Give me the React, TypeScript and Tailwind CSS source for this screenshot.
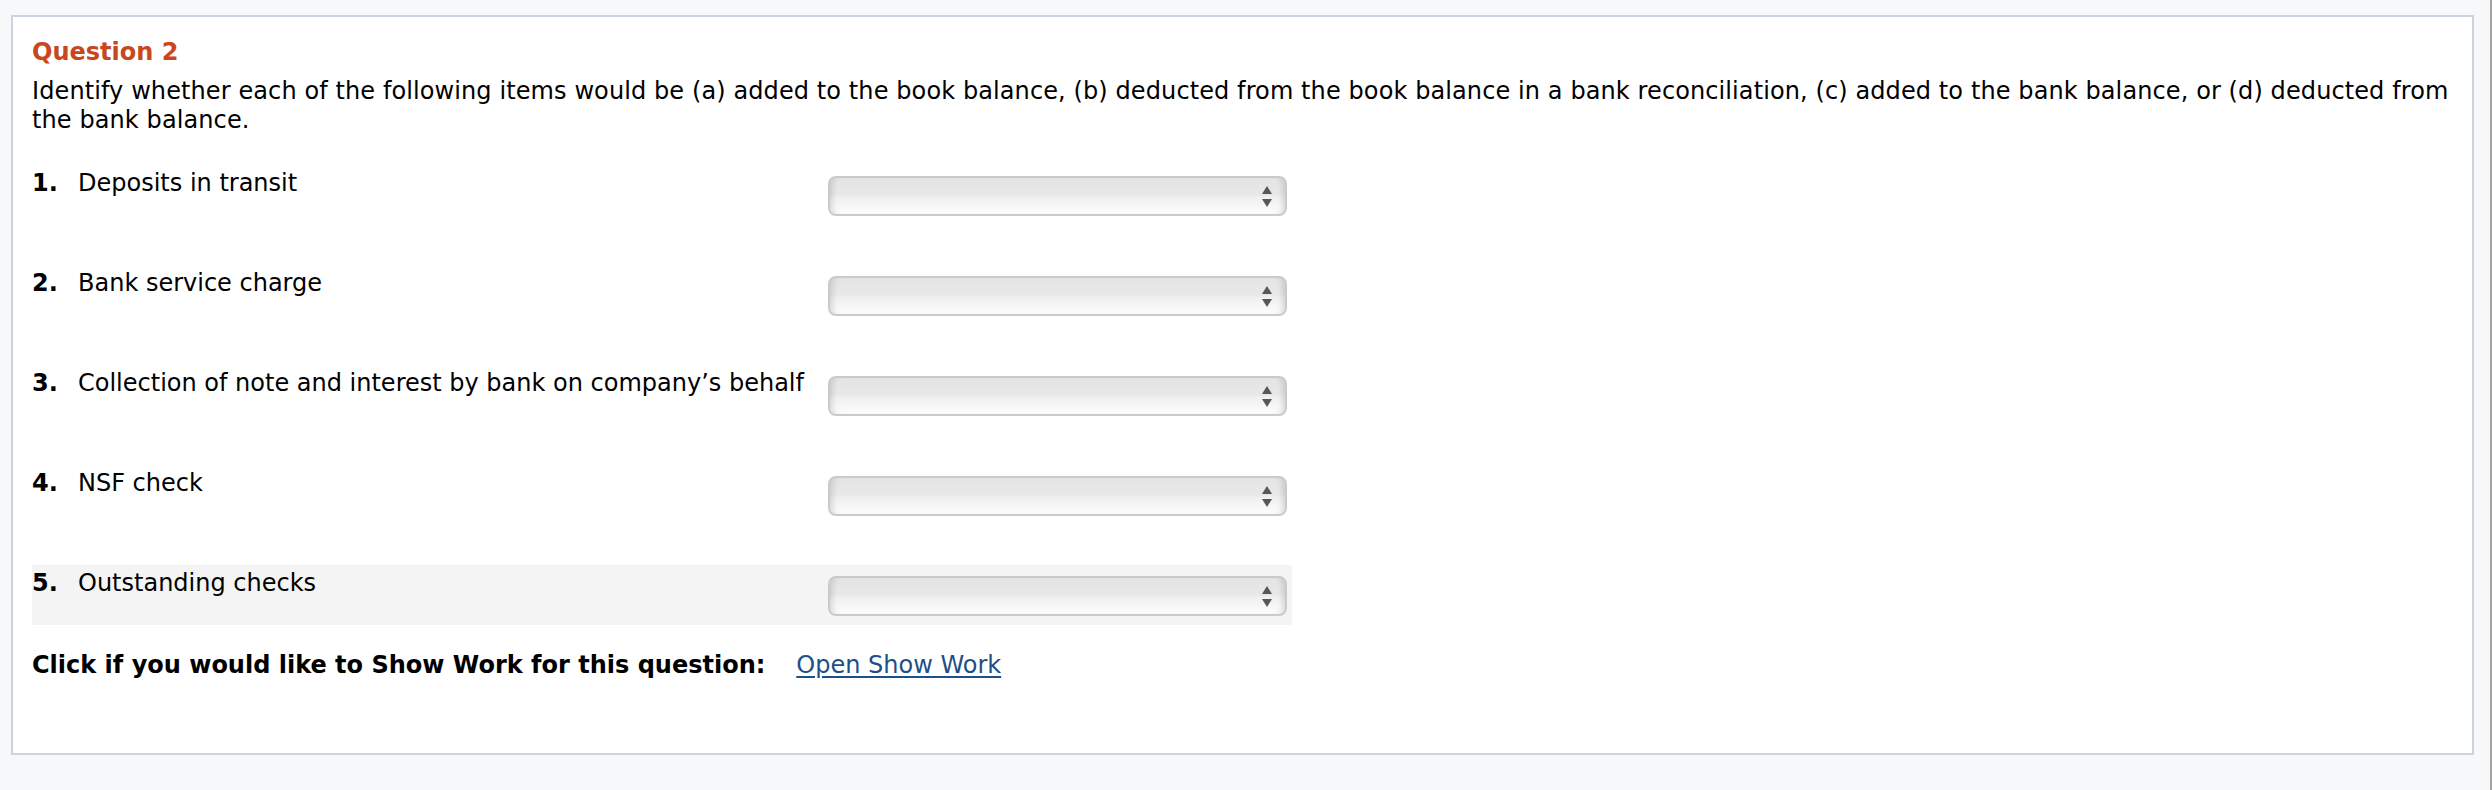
import { FunctionComponent } from "react";

const items = [
  "Deposits in transit",
  "Bank service charge",
  "Collection of note and interest by bank on company\u2019s behalf",
  "NSF check",
  "Outstanding checks",
];

const SelectBox: FunctionComponent = () => {
  return (
    <div className="mt-[11px] flex h-[40px] w-[459px] shrink-0 items-center justify-end rounded-[8px] border-2 border-[#cacaca] bg-[linear-gradient(to_bottom,#e4e4e4_0%,#e8e8e8_47%,#efefef_53%,#fcfcfc_100%)] pr-[13px] shadow-[inset_7px_0_6px_-5px_rgba(0,0,0,0.14),inset_-7px_0_6px_-5px_rgba(0,0,0,0.14)]">
      <svg width="10" height="22" viewBox="0 0 10 22" className="mt-[1px]">
        <polygon points="5,0 10,8 0,8" fill="#54585c" />
        <polygon points="0,13 10,13 5,21" fill="#54585c" />
      </svg>
    </div>
  );
};

const App: FunctionComponent = () => {
  return (
    <div className="flex h-[790px] w-full bg-[#f6f8fa] font-['DejaVu_Sans',Verdana,sans-serif] text-[24px] leading-[29px] text-black">
      <div className="flex-1 pt-[15px] pl-[11px] pr-[16px]">
        <div className="h-[740px] border-2 border-[#cbd3de] bg-white pt-[21px] pl-[19px] pr-[20px]">
          <h2 className="font-bold text-[#c8481d]">Question 2</h2>
          <p className="mt-[10px] tracking-[0.1px]">
            Identify whether each of the following items would be (a) added to the book balance, (b) deducted from the
            book balance in a bank reconciliation, (c) added to the bank balance, or (d) deducted from the bank balance.
          </p>
          <div className="mt-[30px] flex flex-col gap-[40px]">
            {items.map((label, i) => (
              <div
                key={label}
                className={`flex h-[60px] w-[1260px] pr-[5px] ${i === 4 ? "bg-[#f4f4f4]" : ""}`}
              >
                <div className="flex w-[796px] shrink-0 pt-[4px]">
                  <span className="w-[46px] shrink-0 font-bold">{i + 1}.</span>
                  <span>{label}</span>
                </div>
                <SelectBox />
              </div>
            ))}
          </div>
          <div className="mt-[26px] flex">
            <span className="font-bold">Click if you would like to Show Work for this question:</span>
            <a href="#" className="ml-[31px] text-[#1e4f86] underline underline-offset-[3px]">
              Open Show Work
            </a>
          </div>
        </div>
      </div>
      <div className="w-[2px] bg-[#a4a4a4]" />
    </div>
  );
};

export default App;
